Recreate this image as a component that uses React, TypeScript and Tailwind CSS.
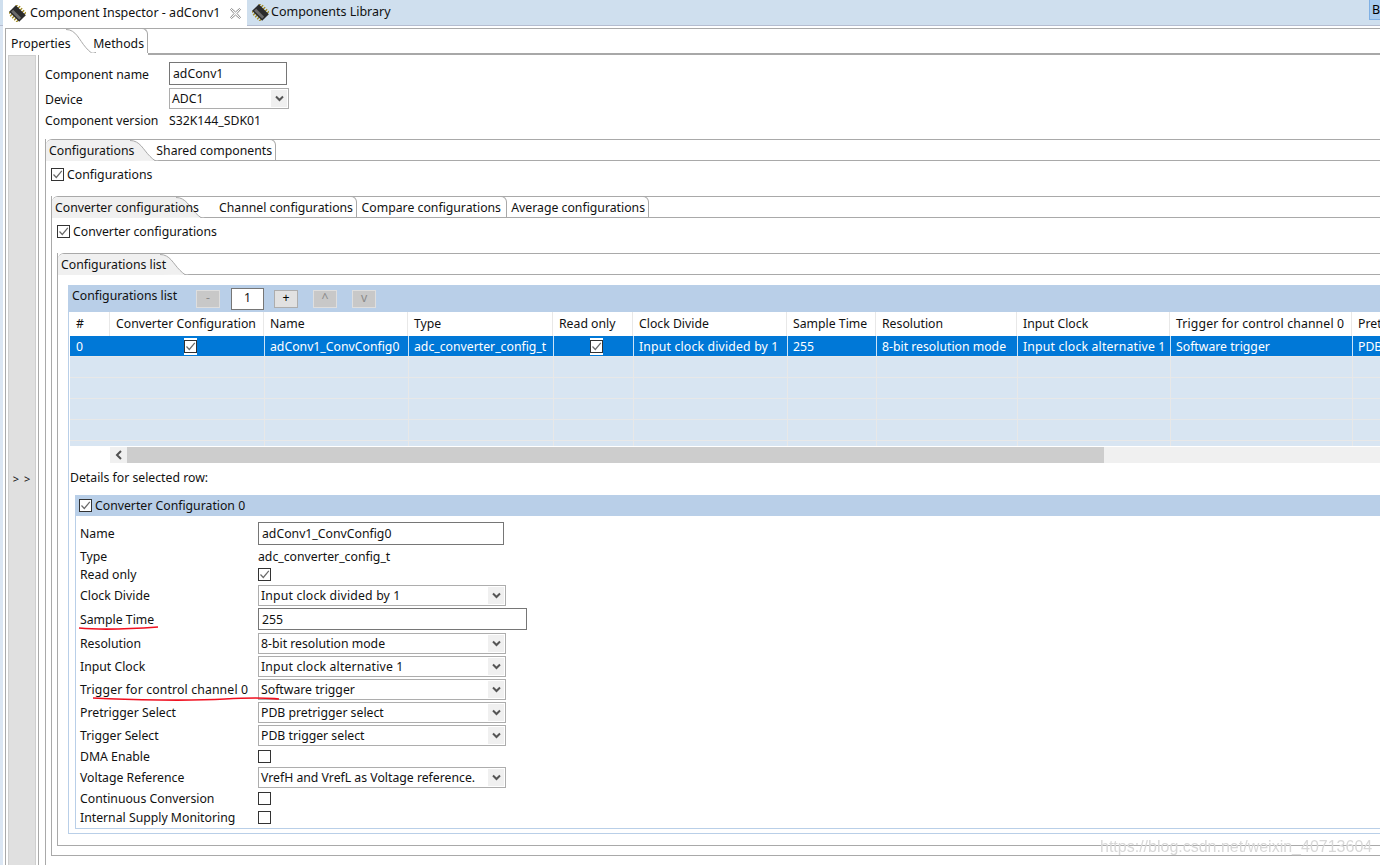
import React from "react";

function ChipIcon() {
  return (
    <svg width="17" height="17" viewBox="0 0 18 18" className="shrink-0">
      <g transform="rotate(-45 9 9)">
        <g stroke="#a08a20" strokeWidth="1.4">
          <path d="M5 2.5H1.5M5 5.5H1.5M5 8.5H1.5M5 11.5H1.5M5 14.5H1.5" />
          <path d="M13 2.5h3.5M13 5.5h3.5M13 8.5h3.5M13 11.5h3.5M13 14.5h3.5" />
        </g>
        <rect x="4" y="1.5" width="10" height="15" fill="#2b2b2b" />
        <rect x="5.5" y="3" width="3" height="12" fill="#6b6b6b" />
      </g>
    </svg>
  );
}

function CloseIcon() {
  return (
    <svg width="11" height="11" viewBox="0 0 11 11" fill="none" stroke="#8c8c8c">
      <path d="M1.5.5 5.5 4 9.5.5l1 1L7 5.5l3.5 4-1 1L5.5 7l-4 3.5-1-1L4 5.5.5 1.5z" />
    </svg>
  );
}

function Check({ checked = true }: { checked?: boolean }) {
  return (
    <span className="flex h-[13px] w-[13px] shrink-0 items-center justify-center border border-[#333] bg-white">
      {checked && (
        <svg width="11" height="11" viewBox="0 0 11 11" fill="none" stroke="#6a6a6a" strokeWidth="1.2">
          <path d="M1.5 5.5 4.3 8.5 9.8 1.8" />
        </svg>
      )}
    </span>
  );
}

function Curve({ fill, height }: { fill: string; height: number }) {
  return (
    <svg width="30" height={height} viewBox={`0 0 30 ${height}`} className="relative z-10 -mr-[6px] shrink-0">
      <path d={`M0 0.5C10 0.5 13 ${height * 0.45} 20 ${height * 0.78}S27 ${height - 0.5} 30 ${height - 0.5}L0 ${height}z`} fill={fill} stroke="none" />
      <path d={`M0 0.5C10 0.5 13 ${height * 0.45} 20 ${height * 0.78}S27 ${height - 0.5} 30 ${height - 0.5}`} fill="none" stroke="#a9a9a9" />
    </svg>
  );
}

function TabRow({ tabs, activeWidth }: { tabs: { label: string; w: string }[]; activeWidth: string }) {
  const [active, ...rest] = tabs;
  return (
    <div className="flex h-[22px] rounded-tl-[6px] border-t border-[#a9a9a9]">
      <div className={`relative z-20 flex h-[21px] shrink-0 items-center whitespace-nowrap rounded-tl-[6px] bg-[#f0f0f0] pl-[3px] pt-[1px] ${activeWidth}`}>
        {active.label}
      </div>
      <Curve fill="#f0f0f0" height={21} />
      {rest.map((t) => (
        <div key={t.label} className={`-mt-px flex h-[22px] shrink-0 items-center justify-end whitespace-nowrap rounded-tr-[6px] border-t border-r border-b border-[#a9a9a9] pr-[3px] pt-[3px] ${t.w}`}>
          {t.label}
        </div>
      ))}
      <div className="flex-1 border-b border-[#a9a9a9]" />
    </div>
  );
}

function Select({ value, w = "w-[248px]", wide = false }: { value: string; w?: string; wide?: boolean }) {
  return (
    <div className={`flex h-[21px] items-center justify-between border border-[#adadad] bg-white pl-[2px] ${w}`}>
      <span className={`pt-[2px] ${wide ? "tracking-[0.17px]" : ""}`}>{value}</span>
      <span className="mr-px flex h-[17px] w-[16px] items-center justify-center bg-[#f0f0f0]">
        <svg width="9" height="7" viewBox="0 0 9 7" fill="none" stroke="#555" strokeWidth="2">
          <path d="M1 1.5 4.5 5 8 1.5" />
        </svg>
      </span>
    </div>
  );
}

function Row({ label, className, wide = false, children }: { label: string; className: string; wide?: boolean; children: React.ReactNode }) {
  return (
    <div className={`flex items-center ${className}`}>
      <span className={`w-[178px] shrink-0 whitespace-nowrap pt-[2px] ${wide ? "tracking-[0.14px]" : ""}`}>{label}</span>
      {children}
    </div>
  );
}

const cols = [
  { title: "#", value: "0" },
  { title: "Converter Configuration", check: true },
  { title: "Name", value: "adConv1_ConvConfig0" },
  { title: "Type", value: "adc_converter_config_t" },
  { title: "Read only", check: true },
  { title: "Clock Divide", value: "Input clock divided by 1", wide: true },
  { title: "Sample Time", value: "255" },
  { title: "Resolution", value: "8-bit resolution mode" },
  { title: "Input Clock", value: "Input clock alternative 1", wide: true },
  { title: "Trigger for control channel 0", value: "Software trigger", wideTitle: true },
  { title: "Pretrigger Select", value: "PDB pretrigger select" },
];

function ConfigTable() {
  return (
    <div className="overflow-hidden pl-px">
      <div className="grid h-[24px] grid-cols-[39px_154px_144px_145px_80px_154px_89px_141px_153px_182px_180px] bg-white">
        {cols.map((c, i) => (
          <div key={c.title} className={`flex items-center whitespace-nowrap border-[#e8e8e8] pl-[6px] ${i > 0 ? "border-l" : ""} ${c.wideTitle ? "tracking-[0.14px]" : ""}`}>
            {c.title}
          </div>
        ))}
      </div>
      <div className="grid h-[21px] grid-cols-[39px_155px_144px_145px_80px_154px_89px_141px_153px_182px_180px] border-b border-[#e8e8e8] bg-[#0078d7] text-white">
        {cols.map((c, i) => (
          <div key={c.title} className={`flex items-center whitespace-nowrap border-white/80 ${i > 1 ? "border-l pl-[5px]" : "pl-[6px]"} ${c.check ? (i === 1 ? "justify-center pl-[8px]" : "justify-center") : "pt-[2px]"} ${c.wide ? "tracking-[0.17px]" : ""}`}>
            {c.check ? (
              <span className="flex h-[17px] items-center bg-white">
                <Check />
              </span>
            ) : (
              c.value
            )}
          </div>
        ))}
      </div>
      {[0, 1, 2, 3, 4].map((r) => (
        <div key={r} className={`grid grid-cols-[39px_155px_144px_145px_80px_154px_89px_141px_153px_182px_180px] border-[#e8e8e8] bg-[#d8e5f2] ${r === 4 ? "h-[5px]" : "h-[21px] border-b"}`}>
          {cols.map((c, i) => (
            <div key={c.title} className={i > 1 ? "border-l border-[#e8e8e8]" : ""} />
          ))}
        </div>
      ))}
      <div className="flex h-[17px] bg-white pt-px">
        <div className="w-[40px] shrink-0" />
        <div className="flex h-[16px] w-[17px] shrink-0 items-center justify-center bg-[#f0f0f0]">
          <svg width="8" height="10" viewBox="0 0 8 10" fill="none" stroke="#505050" strokeWidth="2">
            <path d="M6 1 2 5l4 4" />
          </svg>
        </div>
        <div className="h-[16px] w-[977px] shrink-0 bg-[#cdcdcd]" />
        <div className="h-[16px] flex-1 bg-[#f0f0f0]" />
      </div>
    </div>
  );
}

function BarButton({ label, on = false }: { label: string; on?: boolean }) {
  return (
    <div
      className={`flex h-[18px] w-[24px] shrink-0 items-center justify-center border ${
        on ? "border-[#adadad] bg-[#e1e1e1] text-black" : "border-[#dedede] bg-[#c8c8c8] text-[#8a8a8a]"
      }`}
    >
      {label}
    </div>
  );
}

function Details() {
  return (
    <div className="ml-[6px] border-b border-l border-[#b9cfe8] pb-[3px]">
      <div className="flex h-[21px] items-center gap-[3px] bg-[#b9cfe8] pl-[3px]">
        <Check />
        <span className="pt-[2px]">Converter Configuration 0</span>
      </div>
      <div className="flex flex-col pl-[4px] pt-[6px]">
        <Row label="Name" className="h-[23px]">
          <div className="flex h-[23px] w-[246px] items-center border border-[#767676] bg-white pl-[3px] pt-[2px]">adConv1_ConvConfig0</div>
        </Row>
        <Row label="Type" className="mt-[3px] h-[16px]">
          <span className="pt-[2px]">adc_converter_config_t</span>
        </Row>
        <Row label="Read only" className="mt-[2px] h-[17px]">
          <Check />
        </Row>
        <Row label="Clock Divide" className="mt-[2px] h-[21px]">
          <Select value="Input clock divided by 1" wide />
        </Row>
        <Row label="Sample Time" className="mt-[2px] h-[22px]">
          <div className="flex h-[22px] w-[269px] items-center border border-[#767676] bg-white pl-[3px] pt-[2px]">255</div>
        </Row>
        <Row label="Resolution" className="mt-[3px] h-[21px]">
          <Select value="8-bit resolution mode" />
        </Row>
        <Row label="Input Clock" className="mt-[2px] h-[21px]">
          <Select value="Input clock alternative 1" wide />
        </Row>
        <Row label="Trigger for control channel 0" className="mt-[2px] h-[21px]" wide>
          <Select value="Software trigger" />
        </Row>
        <Row label="Pretrigger Select" className="mt-[2px] h-[21px]">
          <Select value="PDB pretrigger select" />
        </Row>
        <Row label="Trigger Select" className="mt-[2px] h-[21px]">
          <Select value="PDB trigger select" />
        </Row>
        <Row label="DMA Enable" className="mt-[2px] h-[17px]">
          <Check checked={false} />
        </Row>
        <Row label="Voltage Reference" className="mt-[2px] h-[21px]">
          <Select value="VrefH and VrefL as Voltage reference." />
        </Row>
        <Row label="Continuous Conversion" className="mt-[2px] h-[16px]">
          <Check checked={false} />
        </Row>
        <Row label="Internal Supply Monitoring" className="mt-[3px] h-[16px]">
          <Check checked={false} />
        </Row>
      </div>
    </div>
  );
}

export default function App() {
  return (
    <div className="relative h-[865px] w-[1380px] overflow-hidden bg-white font-['Noto_Sans',sans-serif] text-[12.25px] leading-none text-[#111]">
      {/* editor tabs */}
      <div className="flex h-[26px] border-b border-[#b5bdd0] bg-[#cfdfee] text-[12.5px]">
        <div className="ml-[3px] flex h-[26px] w-[244px] items-center bg-white pl-[6px]">
          <ChipIcon />
          <span className="ml-[4px] whitespace-nowrap">Component Inspector - adConv1</span>
          <span className="ml-[9px]">
            <CloseIcon />
          </span>
        </div>
        <div className="ml-[5px] flex items-center">
          <ChipIcon />
          <span className="ml-[2px] whitespace-nowrap">Components Library</span>
        </div>
        <div className="ml-auto flex h-[20px] w-[11px] items-start overflow-hidden border-l border-b border-[#7fb0e4] bg-[#a9cdf0] pl-[2px] pt-[4px] text-black">B</div>
      </div>

      <div className="flex h-[839px]">
        <div className="w-[3px] shrink-0 bg-[#dbe6f3]" />
        <div className="ml-[2px] mt-[2px] min-w-0 flex-1 border-t border-l border-[#a9a9a9]">
          {/* Properties / Methods */}
          <div className="flex h-[26px]">
            <div className="relative z-20 flex h-[24px] w-[60px] shrink-0 items-center whitespace-nowrap rounded-tl-[6px] pl-[5px] pt-[6px]">Properties</div>
            <Curve fill="#ffffff" height={24} />
            <div className="-mt-px flex h-[25px] w-[58px] shrink-0 items-center justify-end rounded-tr-[6px] border-r border-t border-[#a9a9a9] pr-[3px] pt-[6px]">Methods</div>
            <div className="flex-1 border-b-2 border-[#a8a8a8]" />
          </div>

          <div className="flex">
            <div className="ml-[2px] flex w-[28px] shrink-0 justify-center border border-[#cfcfcf] bg-[#e0e0e0] pt-[417px] text-[11px] tracking-[1px]">
              &gt; &gt;
            </div>
            <div className="ml-[2px] min-w-0 flex-1 border-l border-[#a9a9a9] pl-[6px] pt-[7px]">
              <div className="flex h-[23px] items-center">
                <span className="w-[124px] whitespace-nowrap pt-[3px]">Component name</span>
                <div className="flex h-[23px] w-[118px] items-center border border-[#767676] pl-[3px] pt-[2px]">adConv1</div>
              </div>
              <div className="mt-[3px] flex h-[21px] items-center">
                <span className="w-[124px] pt-[3px]">Device</span>
                <Select value="ADC1" w="w-[120px]" />
              </div>
              <div className="mt-[3px] flex h-[19px] items-center">
                <span className="w-[124px] whitespace-nowrap">Component version</span>
                <span>S32K144_SDK01</span>
              </div>

              {/* Configurations folder */}
              <div className="mt-[8px] border-l border-[#a9a9a9]">
                <TabRow activeWidth="w-[84px]" tabs={[{ label: "Configurations", w: "" }, { label: "Shared components", w: "w-[122px]" }]} />
                <div className="ml-[5px] mt-[7px] flex h-[13px] items-center gap-[3px]">
                  <Check />
                  <span className="whitespace-nowrap pt-[2px]">Configurations</span>
                </div>

                <div className="ml-[5px] mt-[15px] border-l border-[#a9a9a9]">
                  <TabRow
                    activeWidth="w-[124px]"
                    tabs={[
                      { label: "Converter configurations", w: "" },
                      { label: "Channel configurations", w: "w-[157px]" },
                      { label: "Compare configurations", w: "w-[150px] pr-[5px]" },
                      { label: "Average configurations", w: "w-[142px]" },
                    ]}
                  />
                  <div className="ml-[5px] mt-[7px] flex h-[13px] items-center gap-[3px]">
                    <Check />
                    <span className="whitespace-nowrap pt-[2px]">Converter configurations</span>
                  </div>

                  {/* Configurations list folder */}
                  <div className="ml-[5px] mt-[15px] border-b border-l border-[#a9a9a9] pb-[11px]">
                    <TabRow activeWidth="w-[102px]" tabs={[{ label: "Configurations list", w: "" }]} />
                    <div className="ml-[10px] mt-[10px] border-b border-l border-[#b9cfe8]">
                      <div className="flex h-[27px] items-center bg-[#b9cfe8] pl-[3px]">
                        <span className="mb-[4px] w-[124px] whitespace-nowrap">Configurations list</span>
                        <BarButton label="-" />
                        <div className="ml-[11px] flex h-[22px] w-[33px] items-center justify-center border border-[#767676] bg-white">1</div>
                        <div className="ml-[10px]">
                          <BarButton label="+" on />
                        </div>
                        <div className="ml-[15px]">
                          <BarButton label="^" />
                        </div>
                        <div className="ml-[15px]">
                          <BarButton label="v" />
                        </div>
                      </div>
                      <ConfigTable />
                      <div className="mb-[4px] flex h-[28px] items-center pl-px pt-[2px]">Details for selected row:</div>
                      <Details />
                      <div className="h-[4px]" />
                    </div>
                  </div>
                  <div className="h-[10px] border-b border-[#a9a9a9]" />
                </div>
                <div className="h-[10px]" />
              </div>
            </div>
          </div>
        </div>
      </div>

      {/* hand-drawn underlines */}
      <svg className="pointer-events-none absolute left-0 top-0" width="1380" height="865" fill="none" stroke="#f01020" strokeWidth="1.6">
        <path d="M79 628C100 630 130 629 158 627" />
        <path d="M93 698C130 700 190 701 225 699S265 698 279 699" />
      </svg>

      {/* watermark */}
      <div className="pointer-events-none absolute left-[1100px] top-[838px] whitespace-nowrap font-['Liberation_Sans',sans-serif] text-[16px] leading-[18px] text-[#d8d8d8] blur-[0.4px]">
        https://blog.csdn.net/weixin_40713604
      </div>
    </div>
  );
}
